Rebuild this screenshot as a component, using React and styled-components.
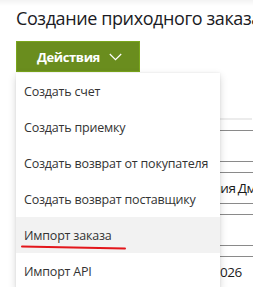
import React from "react";
import styled, { createGlobalStyle } from "styled-components";

const Global = createGlobalStyle`
  html, body { margin: 0; padding: 0; background: #ffffff; overflow: hidden; }
  body { font-family: "Open Sans", "Noto Sans", sans-serif; }
  * { box-sizing: border-box; }
`;

const Page = styled.div`
  position: relative;
  width: 253px;
  height: 287px;
  overflow: hidden;
  padding: 5px 0 0 16px;
  background: linear-gradient(#f3f3f3 0px, #ffffff 6px);
`;

const Title = styled.h1`
  margin: 0;
  font-size: 18px;
  letter-spacing: -0.4px;
  line-height: 26px;
  font-weight: 400;
  color: #1b1b24;
  white-space: nowrap;
`;

const ActionsWrap = styled.div`
  position: relative;
  margin-top: 10px;
  width: max-content;
`;

const ActionsButton = styled.button`
  display: flex;
  align-items: center;
  gap: 9px;
  height: 31px;
  padding: 0 0 0 20px;
  width: 124px;
  background: #6a8d1e;
  border: 1px solid #7aa61c;
  color: #ffffff;
  font-family: inherit;
  font-size: 13px;
  letter-spacing: -0.4px;
  font-weight: 700;
  cursor: pointer;
`;

const Chevron = styled.svg`
  flex: none;
`;

const Menu = styled.ul`
  position: absolute;
  top: 32px;
  left: 0;
  width: 204px;
  margin: 0;
  padding: 0;
  list-style: none;
  background: #ffffff;
  box-shadow: 0 3px 8px rgba(0, 0, 0, 0.16), 0 0 2px rgba(0, 0, 0, 0.08);
  z-index: 2;
`;

const MenuItem = styled.li`
  position: relative;
  height: 36px;
  display: flex;
  align-items: center;
  padding-left: 8px;
  font-size: 12.5px;
  letter-spacing: -0.2px;
  color: #333333;
  white-space: nowrap;
  background: ${(p) => (p.$active ? "#f2f2f2" : "transparent")};
`;

const Underline = styled.svg`
  position: absolute;
  left: 5px;
  top: 29px;
  overflow: visible;
`;

const Separator = styled.div`
  margin-top: 46px;
  height: 2px;
  margin-right: 1px;
  background: #ececec;
`;

const Fields = styled.div`
  display: flex;
  flex-direction: column;
  gap: 10px;
  margin-top: 10px;
`;

const Field = styled.div`
  height: 32px;
  width: 300px;
  border: 1px solid #8a8a8a;
  display: flex;
  align-items: center;
  padding-left: ${(p) => p.$indent || 8}px;
  font-size: 13.5px;
  letter-spacing: -0.4px;
  word-spacing: -1px;
  color: #1b1b1b;
  white-space: nowrap;
`;

const items = [
  "Создать счет",
  "Создать приемку",
  "Создать возврат от покупателя",
  "Создать возврат поставщику",
  "Импорт заказа",
  "Импорт API",
];

export default function App() {
  return (
    <>
      <Global />
      <Page>
        <Title>Создание приходного заказа</Title>
        <ActionsWrap>
          <ActionsButton>
            Действия
            <Chevron width="13" height="8" viewBox="0 0 13 8">
              <polyline
                points="0.8,1 6.5,6.7 12.2,1"
                fill="none"
                stroke="#ffffff"
                strokeWidth="1.2"
              />
            </Chevron>
          </ActionsButton>
          <Menu>
            {items.map((t) => (
              <MenuItem key={t} $active={t === "Импорт заказа"}>
                {t}
                {t === "Импорт заказа" && (
                  <Underline width="106" height="4">
                    <path
                      d="M1 0.5 Q 50 1.6 104 2.6"
                      fill="none"
                      stroke="#e3161b"
                      strokeWidth="2"
                      strokeLinecap="round"
                    />
                  </Underline>
                )}
              </MenuItem>
            ))}
          </Menu>
        </ActionsWrap>
        <Separator />
        <Fields>
          <Field />
          <Field $indent={155}>Компания Дмитриев</Field>
          <Field />
          <Field $indent={160}>15.01.2026</Field>
        </Fields>
      </Page>
    </>
  );
}
